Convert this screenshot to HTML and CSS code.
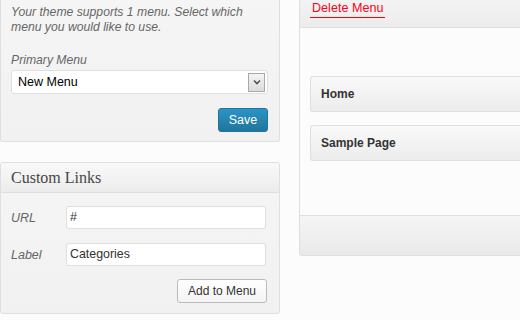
FILE: index.html
```html
<!DOCTYPE html>
<html>
<head>
<meta charset="utf-8">
<link rel="stylesheet" href="styles.css">
</head>
<body>
<div class="wrap">
  <div class="left-col">
    <div class="box locations">
      <p class="desc">Your theme supports 1 menu. Select which menu you would like to use.</p>
      <div class="field-label">Primary Menu</div>
      <div class="select">
        <span class="select-text">New Menu</span>
        <span class="select-arrow"><svg width="8" height="6" viewBox="0 0 8 6"><path d="M1 1.5 L4 4.5 L7 1.5" fill="none" stroke="#555" stroke-width="1.6"/></svg></span>
      </div>
      <div class="actions"><button class="btn-primary">Save</button></div>
    </div>
    <div class="box custom">
      <div class="box-head">Custom Links</div>
      <div class="box-body">
        <div class="row"><span class="row-label">URL</span><div class="input">#</div></div>
        <div class="row"><span class="row-label">Label</span><div class="input">Categories</div></div>
        <div class="actions"><button class="btn">Add to Menu</button></div>
      </div>
    </div>
  </div>
  <div class="editor">
    <div class="editor-head"><span class="delete">Delete Menu</span></div>
    <div class="editor-body">
      <div class="item">Home</div>
      <div class="item">Sample Page</div>
    </div>
    <div class="editor-foot"></div>
  </div>
</div>
</body>
</html>
```
FILE: styles.css
```css
html, body {
  margin: 0;
  padding: 0;
}
body {
  background: #fcfcfc;
  font-family: "Liberation Sans", Arial, sans-serif;
  font-size: 12px;
  color: #333;
  overflow: hidden;
  width: 520px;
  height: 320px;
}
.wrap {
  display: flex;
  align-items: flex-start;
  gap: 19px;
  width: 640px;
}
.left-col {
  width: 280px;
  flex: none;
  display: flex;
  flex-direction: column;
  gap: 20px;
}
.box {
  box-sizing: border-box;
  width: 280px;
  border: 1px solid #dfdfdf;
  border-radius: 3px;
  background: linear-gradient(#f5f5f5, #f1f1f1);
}
.locations {
  border-top: none;
  border-radius: 0 0 3px 3px;
  padding: 5px 11px 9px 10px;
}
.desc {
  margin: 0;
  font-style: italic;
  font-size: 12.2px;
  color: #666;
  line-height: 15px;
}
.field-label {
  margin-top: 18px;
  font-style: italic;
  font-size: 12.2px;
  color: #666;
  line-height: 15px;
}
.select {
  margin-top: 2px;
  box-sizing: border-box;
  height: 24px;
  border: 1px solid #dfdfdf;
  border-radius: 3px;
  background: #fff;
  display: flex;
  align-items: center;
  justify-content: space-between;
  padding: 0 2px 0 6px;
}
.select-text {
  color: #000;
  font-size: 12.5px;
}
.select-arrow {
  box-sizing: border-box;
  width: 17px;
  height: 19px;
  border: 1px solid #a9a9a9;
  background: linear-gradient(#f4f4f4, #dcdcdc);
  display: flex;
  align-items: center;
  justify-content: center;
}
.actions {
  display: flex;
  justify-content: flex-end;
}
.locations .actions {
  margin-top: 14px;
}
.btn-primary {
  box-sizing: border-box;
  width: 50px;
  height: 24px;
  border: 1px solid #21759b;
  border-radius: 3px;
  background: linear-gradient(#2a95c5, #21759b);
  color: #fff;
  font-family: "Liberation Sans", Arial, sans-serif;
  font-size: 12.5px;
  padding: 0;
}
.box-head {
  height: 29px;
  border-bottom: 1px solid #dfdfdf;
  background: linear-gradient(#f9f9f9, #ececec);
  font-family: "Liberation Serif", "Times New Roman", serif;
  font-size: 16px;
  color: #464646;
  line-height: 29px;
  padding-left: 10px;
  border-radius: 3px 3px 0 0;
}
.box-body {
  padding: 13px 13px 10px 10px;
  display: flex;
  flex-direction: column;
  gap: 14px;
}
.box-body .actions {
  margin-top: -1px;
  margin-right: -1px;
}
.row {
  display: flex;
  align-items: center;
}
.row-label {
  width: 55px;
  font-style: italic;
  font-size: 12.5px;
  color: #666;
}
.input {
  box-sizing: border-box;
  width: 200px;
  height: 23px;
  border: 1px solid #dfdfdf;
  border-radius: 3px;
  background: #fff;
  padding-left: 3px;
  line-height: 21px;
  font-size: 12.4px;
  color: #333;
}
.btn {
  box-sizing: border-box;
  width: 90px;
  height: 24px;
  border: 1px solid #bbb;
  border-radius: 3px;
  background: linear-gradient(#fefefe, #f4f4f4);
  color: #333;
  font-family: "Liberation Sans", Arial, sans-serif;
  font-size: 12px;
  padding: 0;
}
.editor {
  flex: none;
  width: 300px;
  box-sizing: border-box;
  border-left: 1px solid #dfdfdf;
  border-bottom: 1px solid #dfdfdf;
  border-radius: 0 0 0 3px;
}
.editor-head {
  border-bottom: 1px solid #dfdfdf;
  background: linear-gradient(#f3f3f3, #ececec);
  padding: 1px 0 0 10px;
  box-sizing: border-box;
  height: 28px;
}
.delete {
  display: inline-block;
  color: #ff0022;
  font-size: 12.6px;
  line-height: 15px;
  padding: 0 2px 1px 2px;
  border-bottom: 1px solid #f00;
}
.editor-body {
  background: #fcfcfc;
  padding: 48px 0 54px 10px;
  display: flex;
  flex-direction: column;
  gap: 13px;
}
.item {
  box-sizing: border-box;
  height: 36px;
  border: 1px solid #dfdfdf;
  border-right: none;
  border-radius: 3px 0 0 3px;
  background: linear-gradient(#f9f9f9, #ececec);
  font-weight: bold;
  font-size: 12px;
  color: #333;
  line-height: 34px;
  padding-left: 10px;
}
.editor-foot {
  height: 39px;
  border-top: 1px solid #dfdfdf;
  background: linear-gradient(#f5f5f5, #e9e9e9);
}
```
